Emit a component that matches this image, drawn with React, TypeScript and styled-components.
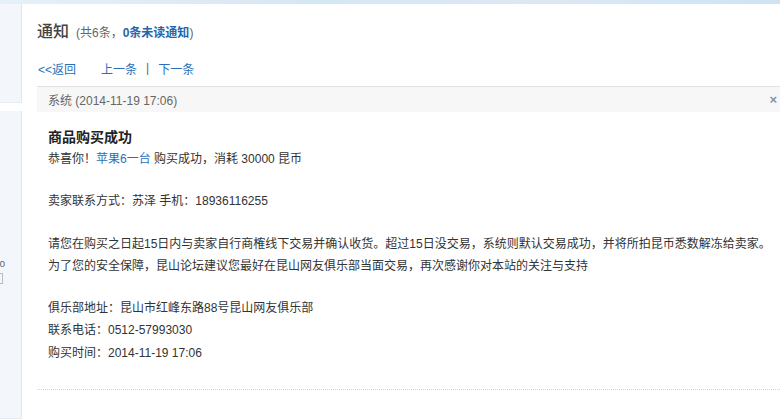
import styled, { createGlobalStyle } from "styled-components";

const GlobalStyle = createGlobalStyle`
  html, body {
    margin: 0;
    padding: 0;
    background: #fff;
  }
  body {
    font-family: "Liberation Sans", Arial, "Noto Sans CJK SC", sans-serif;
    font-size: 12px;
    color: #333;
  }
`;

export default function App() {
  return (
    <>
      <GlobalStyle />
      <Page>
        <TopStrip />
        <Layout>
          <Sidebar>
            <SideBox $height={99} />
            <SideBox $grow>
              <SideStub>
                <span>o</span>
                <StubBox />
              </SideStub>
            </SideBox>
          </Sidebar>
          <Main>
            <Heading>
              <Title>通知</Title>
              <Count>
                (共6条，<strong>0条未读通知</strong>)
              </Count>
            </Heading>
            <Pager>
              <PagerLink href="#">&lt;&lt;返回</PagerLink>
              <PagerGroup>
                <PagerLink href="#">上一条</PagerLink>
                <Sep>|</Sep>
                <PagerLink href="#">下一条</PagerLink>
              </PagerGroup>
            </Pager>
            <Notice>
              <NoticeHead>
                <span>系统 (2014-11-19 17:06)</span>
                <Close>×</Close>
              </NoticeHead>
              <NoticeBody>
                <Subject>商品购买成功</Subject>
                <Line>
                  恭喜你！<Accent href="#">苹果6一台</Accent> 购买成功，消耗 30000 昆币
                </Line>
                <Blank />
                <Line>卖家联系方式：苏泽 手机：18936116255</Line>
                <Blank />
                <Line>
                  请您在购买之日起15日内与卖家自行商榷线下交易并确认收货。超过15日没交易，系统则默认交易成功，并将所拍昆币悉数解冻给卖家。
                </Line>
                <Line>
                  为了您的安全保障，昆山论坛建议您最好在昆山网友俱乐部当面交易，再次感谢你对本站的关注与支持
                </Line>
                <Blank />
                <Line>俱乐部地址：昆山市红峰东路88号昆山网友俱乐部</Line>
                <Line>联系电话：0512-57993030</Line>
                <Line>购买时间：2014-11-19 17:06</Line>
              </NoticeBody>
            </Notice>
          </Main>
        </Layout>
      </Page>
    </>
  );
}

const Page = styled.div`
  width: 780px;
  height: 419px;
  overflow: hidden;
  display: flex;
  flex-direction: column;
`;

const TopStrip = styled.div`
  height: 4px;
  flex: none;
  background: linear-gradient(90deg, #e6f0f8 0%, #d6e7f4 40%, #dbe9f5 70%, #cfe3f3 100%);
`;

const Layout = styled.div`
  flex: 1;
  display: flex;
  min-height: 0;
`;

const Sidebar = styled.div`
  width: 22px;
  flex: none;
  display: flex;
  flex-direction: column;
  gap: 8px;
`;

const SideBox = styled.div<{ $height?: number; $grow?: boolean }>`
  height: ${(p) => (p.$height ? `${p.$height}px` : "auto")};
  flex: ${(p) => (p.$grow ? 1 : "none")};
  background: #f3f7fb;
  border-right: 1px solid #dfe8f0;
  border-bottom: 1px solid #e4ecf3;
  box-sizing: border-box;
`;

const SideStub = styled.div`
  padding-top: 148px;
  display: flex;
  flex-direction: column;
  align-items: flex-end;
  gap: 4px;
  color: #666;
  font-size: 10px;
  line-height: 10px;
  span {
    margin-right: 16px;
  }
`;

const StubBox = styled.div`
  width: 5px;
  height: 9px;
  border: 1px solid #bbb;
  border-left: none;
  margin-right: 18px;
`;

const Main = styled.div`
  flex: 1;
  padding-left: 15px;
  display: flex;
  flex-direction: column;
`;

const Heading = styled.div`
  display: flex;
  align-items: baseline;
  gap: 7px;
  padding-top: 14px;
  height: 24px;
`;

const Title = styled.h2`
  margin: 0;
  font-family: "Noto Sans CJK SC", sans-serif;
  font-size: 16px;
  font-weight: 500;
  color: #444;
`;

const Count = styled.span`
  font-size: 12px;
  color: #666;
  strong {
    color: #2466a8;
    font-weight: bold;
  }
`;

const Pager = styled.div`
  display: flex;
  align-items: center;
  gap: 25px;
  margin-top: 17px;
  height: 18px;
  padding-left: 1px;
`;

const PagerGroup = styled.div`
  display: flex;
  gap: 7px;
  align-items: center;
`;

const PagerLink = styled.a`
  color: #2a70b8;
  text-decoration: none;
  font-size: 12px;
`;

const Sep = styled.span`
  color: #666;
  padding: 0 2px;
`;

const Notice = styled.div`
  margin-top: 9px;
  flex: 1;
  display: flex;
  flex-direction: column;
`;

const NoticeHead = styled.div`
  height: 25px;
  background: #f7f7f7;
  border-top: 1px solid #e2e2e2;
  display: flex;
  align-items: center;
  justify-content: space-between;
  padding-left: 11px;
  color: #666;
`;

const Close = styled.span`
  color: #7a94b8;
  font-size: 13px;
  font-weight: bold;
  margin-right: 3px;
`;

const NoticeBody = styled.div`
  padding: 14px 0 0 11px;
  height: 263px;
  border-bottom: 1px dotted #d2d2d2;
`;

const Subject = styled.div`
  font-size: 14px;
  font-weight: bold;
  color: #222;
  line-height: 22px;
`;

const Line = styled.div`
  line-height: 22.3px;
  color: #333;
  white-space: nowrap;
`;

const Blank = styled.div`
  height: 20px;
`;

const Accent = styled.a`
  color: #2a70b8;
  text-decoration: none;
`;
